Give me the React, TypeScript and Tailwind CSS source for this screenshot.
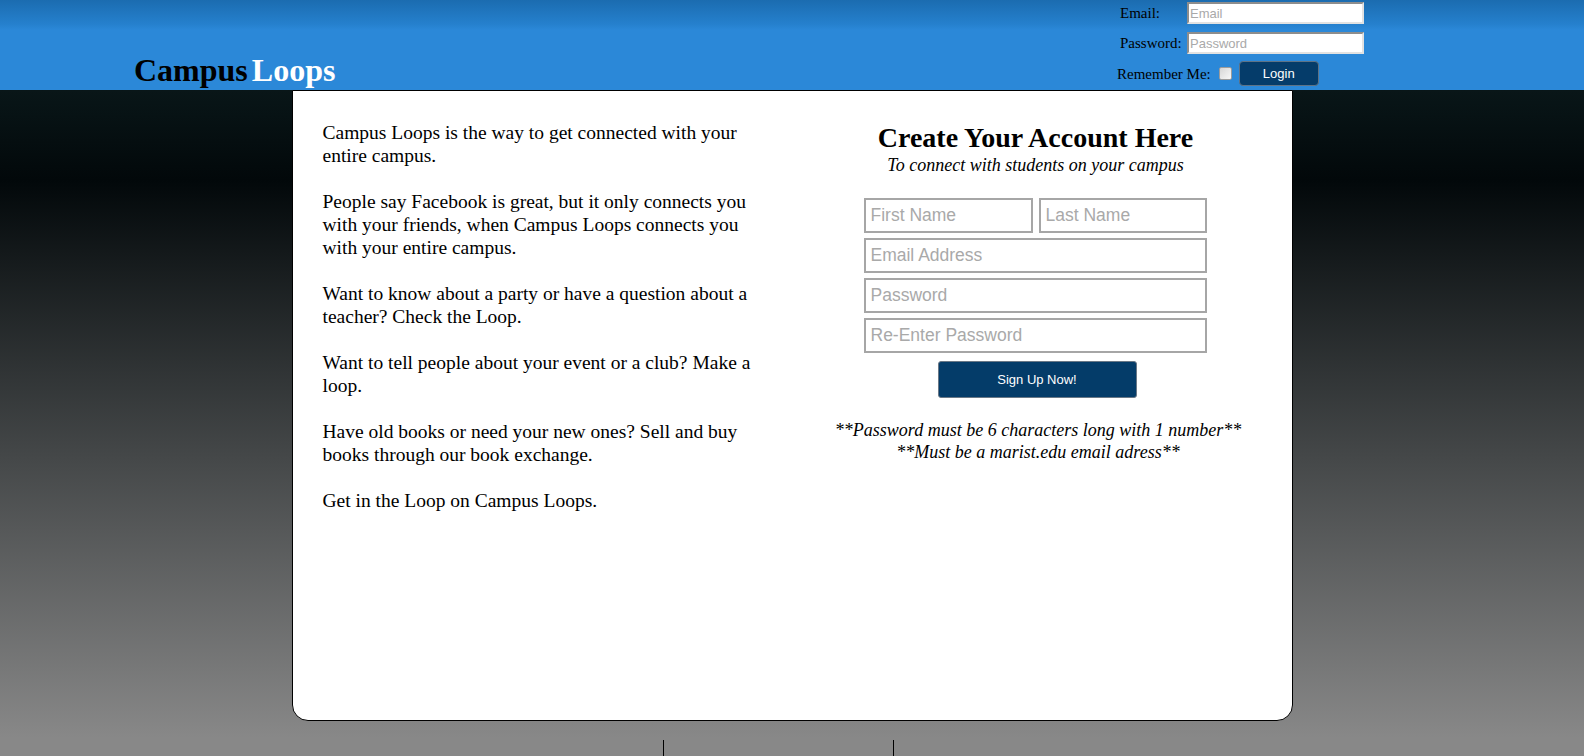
import React from "react";

const paragraphs = [
  "Campus Loops is the way to get connected with your entire campus.",
  "People say Facebook is great, but it only connects you with your friends, when Campus Loops connects you with your entire campus.",
  "Want to know about a party or have a question about a teacher? Check the Loop.",
  "Want to tell people about your event or a club? Make a loop.",
  "Have old books or need your new ones? Sell and buy books through our book exchange.",
  "Get in the Loop on Campus Loops.",
];

function HeaderInput({ placeholder, type = "text" }: { placeholder: string; type?: string }) {
  return (
    <input
      type={type}
      placeholder={placeholder}
      className="w-[177px] h-[22px] bg-white border-2 border-t-[#8d8d8d] border-l-[#8d8d8d] border-b-[#e2e2e2] border-r-[#e2e2e2] pl-[1px] text-[13px] font-['Liberation_Sans',Arial,sans-serif] text-black placeholder:text-[#a9a9a9] outline-none"
    />
  );
}

function SignInput({ placeholder, className = "", type = "text" }: { placeholder: string; className?: string; type?: string }) {
  return (
    <input
      type={type}
      placeholder={placeholder}
      className={
        "h-[35px] bg-white border-2 border-[#a6a6a6] pl-[5px] text-[17.5px] font-['Liberation_Sans',Arial,sans-serif] text-black placeholder:text-[#a9a9a9] outline-none " +
        className
      }
    />
  );
}

export default function App() {
  return (
    <div className="min-h-[756px] bg-[#888888] font-['Liberation_Serif','Times_New_Roman',serif] text-black">
      <header className="h-[90px] flex items-start bg-[linear-gradient(to_bottom,#1b6cb0_0px,#2580cd_24px,#2b88d8_30px,#2b88d8_100%)]">
        <div className="pl-[134px] pt-[52px] text-[32px] leading-[37px] font-bold flex">
          <span className="text-black">Campus</span>
          <span className="text-white ml-[4px]">Loops</span>
        </div>
        <div className="ml-auto mr-[220px] flex flex-col text-[15px]">
          <div className="flex items-center mt-[2px] h-[22px] pl-[3px]">
            <span className="w-[67px] leading-[22px]">Email:</span>
            <HeaderInput placeholder="Email" />
          </div>
          <div className="flex items-center mt-[8px] h-[22px] pl-[3px]">
            <span className="w-[67px] leading-[22px]">Password:</span>
            <HeaderInput placeholder="Password" type="password" />
          </div>
          <div className="flex items-center mt-[7px] h-[25px]">
            <span className="leading-[22px]">Remember Me:</span>
            <input
              type="checkbox"
              className="appearance-none ml-[8px] w-[13px] h-[13px] rounded-[2px] border border-[#9c9c9c] bg-[linear-gradient(135deg,#d6d6d6,#f8f8f8)]"
            />
            <button className="ml-[7px] w-[80px] h-[25px] rounded-[4px] bg-[#053c6a] border border-[#5f7386] text-white text-[13px] font-['Liberation_Sans',Arial,sans-serif]">
              Login
            </button>
          </div>
        </div>
      </header>

      <main className="h-[650px] bg-[linear-gradient(to_bottom,#091618_0px,#02080a_90px,#888888_648px)]">
        <div className="mx-auto w-[1001px] h-[631px] bg-white border border-black rounded-b-[16px] flex px-[30px] pt-[30px]">
          <div className="w-[450px] text-[19.5px] leading-[23px]">
            {paragraphs.map((p, i) => (
              <p key={i} className="mb-[23px]">
                {p}
              </p>
            ))}
          </div>
          <div className="ml-[37px] w-[452px] flex flex-col items-center">
            <h1 className="mt-[1px] text-[28px] leading-[32px] font-bold">Create Your Account Here</h1>
            <p className="text-[18px] leading-[22px] italic">To connect with students on your campus</p>
            <div className="mt-[22px] w-[343px] ml-[-1px] flex flex-col gap-[5px]">
              <div className="flex gap-[6px]">
                <SignInput placeholder="First Name" className="w-[169px]" />
                <SignInput placeholder="Last Name" className="w-[168px]" />
              </div>
              <SignInput placeholder="Email Address" className="w-[343px]" />
              <SignInput placeholder="Password" className="w-[343px]" type="password" />
              <SignInput placeholder="Re-Enter Password" className="w-[343px]" type="password" />
            </div>
            <button className="mt-[8px] ml-[3px] w-[199px] h-[37px] rounded-[3px] bg-[#043c69] border border-[#6a7886] text-white text-[13px] font-['Liberation_Sans',Arial,sans-serif]">
              Sign Up Now!
            </button>
            <div className="mt-[21px] ml-[5px] text-[18px] leading-[22px] italic text-center whitespace-nowrap">
              <p>**Password must be 6 characters long with 1 number**</p>
              <p>**Must be a marist.edu email adress**</p>
            </div>
          </div>
        </div>
      </main>

      <footer className="h-[40px] pl-[663px]">
        <div className="w-[231px] h-full border-x border-black" />
      </footer>
    </div>
  );
}
